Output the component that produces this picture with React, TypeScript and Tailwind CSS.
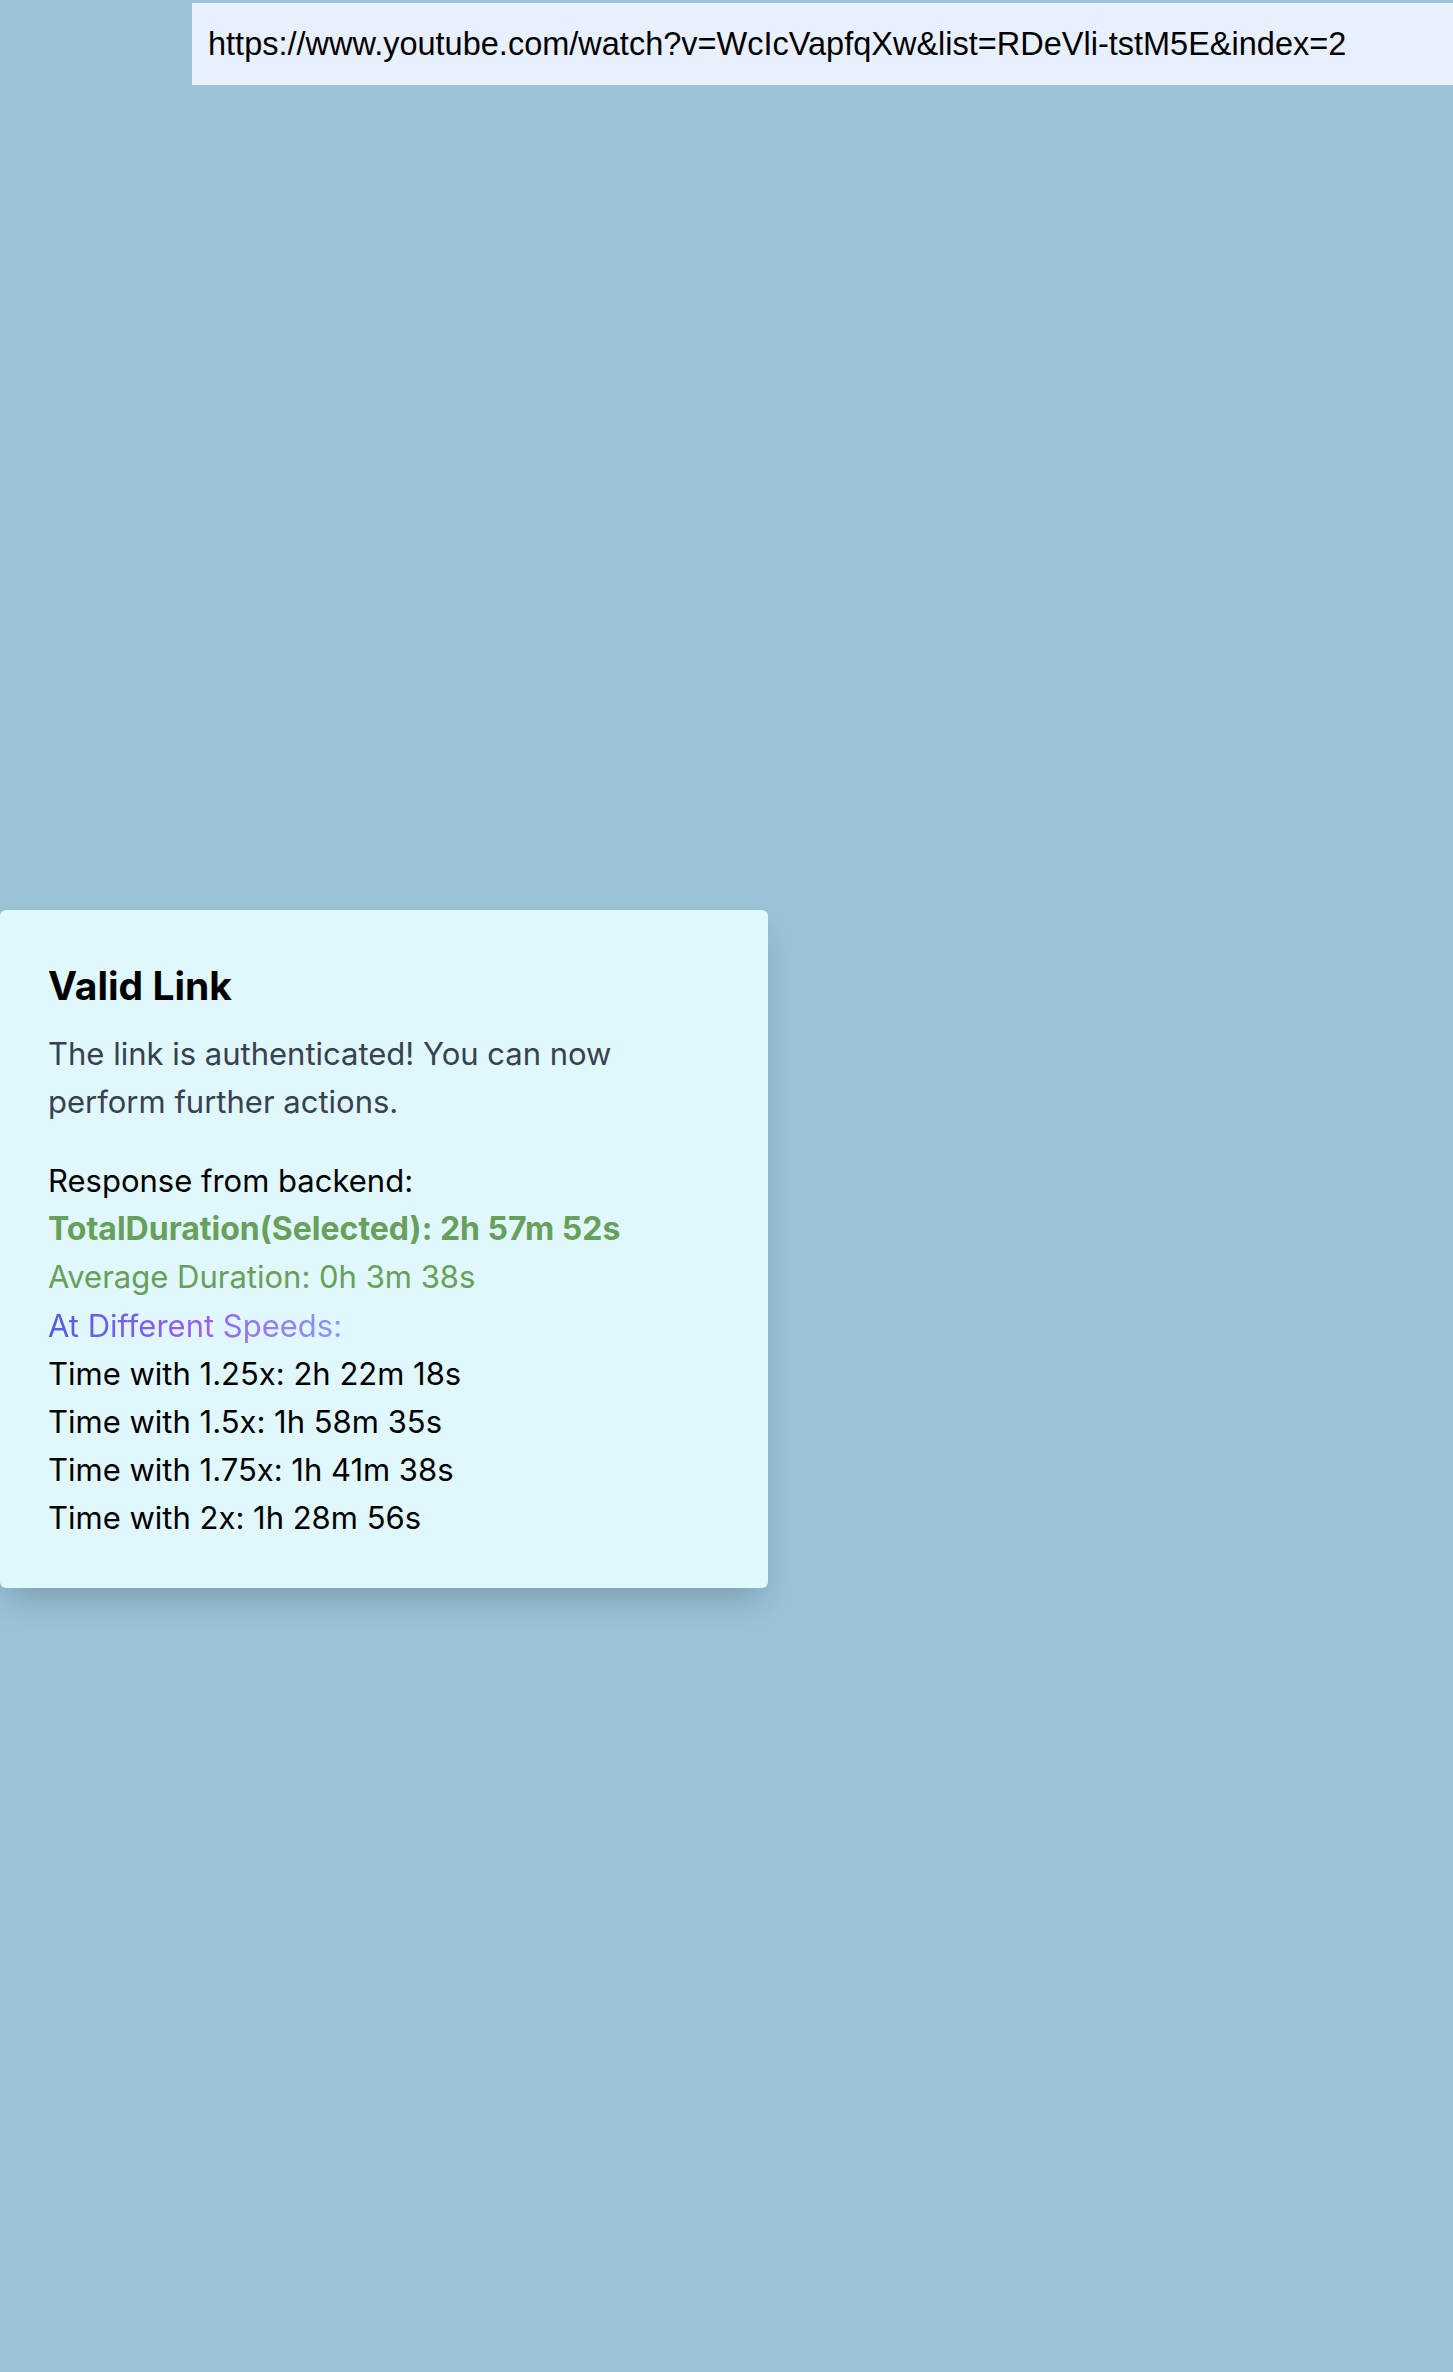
import { useState } from "react";

const SPEEDS = [
  { label: "1.25x", time: "2h 22m 18s" },
  { label: "1.5x", time: "1h 58m 35s" },
  { label: "1.75x", time: "1h 41m 38s" },
  { label: "2x", time: "1h 28m 56s" },
];

export default function App() {
  const [url, setUrl] = useState(
    "https://www.youtube.com/watch?v=WcIcVapfqXw&list=RDeVli-tstM5E&index=2"
  );

  return (
    <div className="min-h-[2372px] bg-[#9ac3d8] font-['Inter',sans-serif]">
      <div className="flex justify-end pt-[3px]">
        <input
          value={url}
          onChange={(e) => setUrl(e.target.value)}
          className="h-[82px] w-[1261px] bg-[#e8f0fe] px-[16px] font-['Liberation_Sans',sans-serif] text-[32.5px] text-black outline-none"
        />
      </div>

      <div className="mt-[825px] w-[768px] rounded-[6px] bg-[#e0f7fc] px-[48px] pt-[52px] pb-[45px] shadow-[0_18px_30px_-6px_rgba(0,0,0,0.18)]">
        <h2 className="text-[39px] font-bold leading-[48px] text-black">Valid Link</h2>
        <p className="mt-[20px] text-[31px] leading-[48px] text-[#374151]">
          The link is authenticated! You can now perform further actions.
        </p>

        <div className="mt-[31px] text-[31px] leading-[48.2px] text-black">
          <p>Response from backend:</p>
          <p className="text-[32px] font-bold text-[#66a05a]">TotalDuration(Selected): 2h 57m 52s</p>
          <p className="text-[#66a05a]">Average Duration: 0h 3m 38s</p>
          <p>
            <span className="bg-gradient-to-r from-[#4f5be6] via-[#9b5cf0] to-[#8f95f5] bg-clip-text text-transparent">
              At Different Speeds:
            </span>
          </p>
          {SPEEDS.map((s) => (
            <p key={s.label}>
              Time with {s.label}: {s.time}
            </p>
          ))}
        </div>
      </div>
    </div>
  );
}
